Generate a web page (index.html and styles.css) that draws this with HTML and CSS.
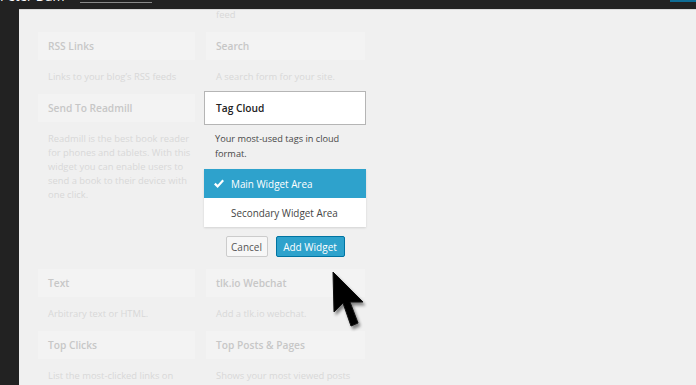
FILE: index.html
```html
<!DOCTYPE html>
<html>
<head>
<meta charset="utf-8">
<link rel="stylesheet" href="styles.css">
</head>
<body>
<div class="topbar">
  <div class="site-name">Peter Dam</div>
  <div class="tab-line"></div>
  <div class="top-spacer"></div>
  <div class="top-btn"></div>
</div>
<div class="main">
  <div class="sidebar"></div>
  <div class="panel">
    <div class="grid">
      <div class="cell"></div>
      <div class="cell"><div class="desc tail">feed</div></div>

      <div class="widget"><div class="title">RSS Links</div><div class="desc">Links to your blog’s RSS feeds</div></div>
      <div class="widget"><div class="title">Search</div><div class="desc">A search form for your site.</div></div>

      <div class="widget"><div class="title">Send To Readmill</div><div class="desc">Readmill is the best book reader for phones and tablets. With this widget you can enable users to send a book to their device with one click.</div></div>
      <div class="widget active">
        <div class="title">Tag Cloud</div>
        <div class="desc">Your most-used tags in cloud format.</div>
        <div class="chooser">
          <div class="option selected">
            <svg class="check" viewBox="0 0 10 9" width="10" height="9"><path d="M0.8 4.6 L3.6 7.4 L9.2 1.2" fill="none" stroke="#fff" stroke-width="2.2"/></svg>
            <span>Main Widget Area</span>
          </div>
          <div class="option"><span>Secondary Widget Area</span></div>
        </div>
        <div class="actions">
          <button class="btn cancel">Cancel</button>
          <button class="btn primary">Add Widget</button>
        </div>
      </div>

      <div class="widget"><div class="title">Text</div><div class="desc">Arbitrary text or HTML.</div></div>
      <div class="widget"><div class="title">tlk.io Webchat</div><div class="desc">Add a tlk.io webchat.</div></div>

      <div class="widget"><div class="title">Top Clicks</div><div class="desc">List the most-clicked links on</div></div>
      <div class="widget"><div class="title">Top Posts &amp; Pages</div><div class="desc">Shows your most viewed posts</div></div>
    </div>
  </div>
</div>
<svg class="cursor" width="40" height="62" viewBox="0 0 40 62">
  <polygon points="1,1 2,41 11,32 19,55 26,52 18,31 31,31" fill="#000" stroke="#111" stroke-width="1"/>
</svg>
</body>
</html>
```

FILE: styles.css
```css
html, body {
  margin: 0;
  padding: 0;
}
body {
  width: 696px;
  height: 385px;
  overflow: hidden;
  background: #222;
  font-family: "Open Sans", "Noto Sans", sans-serif;
  position: relative;
}
.topbar {
  height: 9px;
  background: #222;
  display: flex;
  overflow: hidden;
}
.site-name {
  color: #fff;
  font-size: 13px;
  line-height: 13px;
  margin-top: -10px;
  width: 80px;
  flex: none;
  white-space: nowrap;
}
.tab-line {
  width: 72px;
  height: 1px;
  margin-top: 2px;
  background: #8a8a8a;
  flex: none;
}
.top-spacer { flex: 1; }
.top-btn {
  width: 26px;
  height: 2px;
  background: #0f6c94;
  flex: none;
}
.main {
  display: flex;
  height: 376px;
}
.sidebar {
  width: 19px;
  flex: none;
  background: #222;
}
.panel {
  flex: 1;
  background: #f0f0f0;
  border-top: 1px solid #d9d9d9;
  overflow: hidden;
}
.grid {
  display: grid;
  grid-template-columns: 157px 159px;
  column-gap: 11px;
  padding-left: 19px;
  margin-top: -2px;
  align-items: start;
}
.widget {
  display: flex;
  flex-direction: column;
}
.title {
  height: 28px;
  display: flex;
  align-items: center;
  padding: 0 10px;
  background: #f3f3f3;
  color: #c7c7c7;
  font-size: 10.2px;
  font-weight: 600;
}
.desc {
  padding: 10px 2px 10px 10px;
  font-size: 9.4px;
  line-height: 14px;
  color: #d8d8d8;
}
.tail {
  padding-top: 0;
}
.active {
  margin: -3px -1px 0 -2px;
  padding-bottom: 12px;
}
.active .title {
  height: 32px;
  background: #fff;
  border: 1px solid #b5b5b5;
  color: #222;
  padding: 0 11px;
}
.active .desc {
  color: #484848;
  font-size: 9.2px;
  line-height: 15px;
  padding: 6px 11px 8px;
}
.chooser {
  background: #fff;
  box-shadow: 0 1px 2px rgba(0,0,0,0.12);
  display: flex;
  flex-direction: column;
}
.option {
  height: 29px;
  display: flex;
  align-items: center;
  padding-left: 27px;
  font-size: 9.9px;
  color: #444;
  position: relative;
}
.option.selected {
  background: #2ea2cc;
  color: #fff;
}
.check {
  position: absolute;
  left: 10px;
  top: 10px;
}
.actions {
  display: flex;
  justify-content: center;
  gap: 8px;
  margin-top: 9px;
}
.btn {
  height: 21px;
  font-family: "Open Sans", "Noto Sans", sans-serif;
  font-size: 10px;
  border-radius: 2px;
  padding: 0 7px;
  cursor: pointer;
}
.btn.cancel {
  background: #f7f7f7;
  border: 1px solid #cccccc;
  color: #555;
  width: 42px;
  padding: 0;
}
.btn.primary {
  background: #2ea2cc;
  border: 1px solid #0074a2;
  color: #fff;
  width: 69px;
  padding: 0;
}
.cursor {
  position: absolute;
  left: 332px;
  top: 271px;
  filter: drop-shadow(2px 3px 1.5px rgba(0,0,0,0.45));
}
```
